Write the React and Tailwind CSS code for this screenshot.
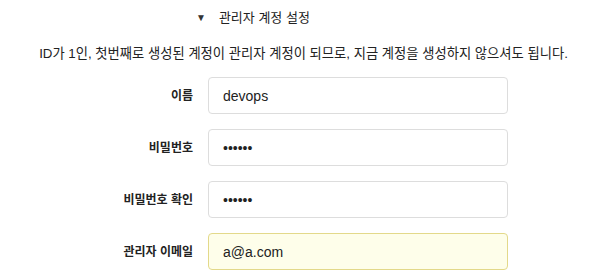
export default function App() {
  const rows = [
    { label: "이름", value: "devops", type: "text" },
    { label: "비밀번호", value: "123456", type: "password" },
    { label: "비밀번호 확인", value: "123456", type: "password" },
    { label: "관리자 이메일", value: "a@a.com", type: "text", filled: true },
  ];

  return (
    <div
      className="h-[279px] w-[607px] overflow-hidden bg-white text-[#222]"
      style={{ fontFamily: '"Liberation Sans", "Noto Sans CJK KR", sans-serif' }}
    >
      <div className="flex items-center pl-[196px] pt-[9px] text-[13px] leading-[17px]">
        <span className="mr-[13px] text-[10px] text-[#333]">▼</span>
        <span>관리자 계정 설정</span>
      </div>

      <p className="mt-[19px] text-center text-[13.3px] leading-[18px]">
        ID가 1인, 첫번째로 생성된 계정이 관리자 계정이 되므로, 지금 계정을 생성하지 않으셔도 됩니다.
      </p>

      <div className="mt-[14px] flex flex-col gap-[15px]">
        {rows.map((row) => (
          <div key={row.label} className="flex items-center">
            <label className="w-[193px] text-right text-[12px] font-bold">{row.label}</label>
            <input
              readOnly
              type={row.type}
              value={row.value}
              className={
                row.filled
                  ? "ml-[15px] h-[37px] w-[300px] rounded-[4px] border border-[#e3d98a] bg-[#fefeea] px-[14px] text-[14px] text-[#222] outline-none"
                  : "ml-[15px] h-[37px] w-[300px] rounded-[4px] border border-[#ddd] bg-white px-[14px] text-[14px] text-[#222] outline-none"
              }
            />
          </div>
        ))}
      </div>
    </div>
  );
}
